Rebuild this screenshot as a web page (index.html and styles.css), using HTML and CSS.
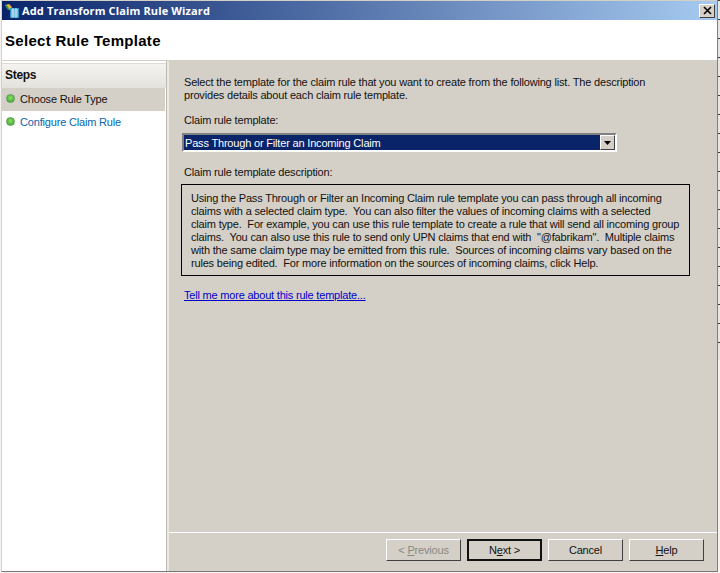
FILE: index.html
```html
<!DOCTYPE html>
<html lang="en">
<head>
<meta charset="utf-8">
<title>Add Transform Claim Rule Wizard</title>
<link rel="stylesheet" href="styles.css">
</head>
<body>
<div class="window">
  <div class="titlebar">
    <svg class="app-icon" width="16" height="16" viewBox="0 0 16 16">
      <path d="M1 2l4-1 3 3-2 3z" fill="#e8b23a"/>
      <path d="M1 2l3 5 2 0-3-5z" fill="#3f9e4a"/>
      <rect x="6" y="5" width="9" height="10" fill="#2f8fc4"/>
      <path d="M7 7h7M7 9h7M7 11h7M7 13h7M9 5v10M12 5v10" stroke="#cfeaf5" stroke-width="1"/>
    </svg>
    <span class="title-text">Add Transform Claim Rule Wizard</span>
    <span class="close-btn">
      <svg width="9" height="9" viewBox="0 0 9 9"><path d="M1 1l7 7M8 1l-7 7" stroke="#000" stroke-width="1.6"/></svg>
    </span>
  </div>
  <div class="page-head"><h1>Select Rule Template</h1></div>
  <div class="body">
    <aside class="steps">
      <div class="steps-head">Steps</div>
      <div class="step step-active"><span class="dot"></span>Choose Rule Type</div>
      <div class="step step-link"><span class="dot"></span>Configure Claim Rule</div>
    </aside>
    <main class="content">
      <div class="form">
        <p class="intro">Select the template for the claim rule that you want to create from the following list. The description<br>provides details about each claim rule template.</p>
        <div class="label label-select">Claim rule template:</div>
        <div class="select">
          <span class="select-value">Pass Through or Filter an Incoming Claim</span>
          <span class="select-arrow"><svg width="7" height="4" viewBox="0 0 7 4"><path d="M0 0h7L3.5 4z" fill="#000"/></svg></span>
        </div>
        <div class="label label-desc">Claim rule template description:</div>
        <div class="desc">Using the Pass Through or Filter an Incoming Claim rule template you can pass through all incoming<br>claims with a selected claim type.&nbsp; You can also filter the values of incoming claims with a selected<br>claim type.&nbsp; For example, you can use this rule template to create a rule that will send all incoming group<br>claims.&nbsp; You can also use this rule to send only UPN claims that end with &nbsp;"@fabrikam".&nbsp; Multiple claims<br>with the same claim type may be emitted from this rule.&nbsp; Sources of incoming claims vary based on the<br>rules being edited.&nbsp; For more information on the sources of incoming claims, click Help.</div>
        <a class="more" href="#">Tell me more about this rule template...</a>
      </div>
      <div class="buttons">
        <span class="btn btn-disabled">&lt; <u>P</u>revious</span>
        <span class="btn btn-default">N<u>e</u>xt &gt;</span>
        <span class="btn">Cancel</span>
        <span class="btn"><u>H</u>elp</span>
      </div>
    </main>
  </div>
</div>
</body>
</html>
```

FILE: styles.css
```css
* { box-sizing: border-box; }
html, body { margin: 0; padding: 0; }
body { width: 720px; height: 573px; overflow: hidden; background: repeating-linear-gradient(180deg, #3a3a3a 0 1px, #e6e6e2 1px 19px) right top / 2px 360px no-repeat, #f4f3f0; font-family: "Liberation Sans", Arial, sans-serif; font-size: 11px; letter-spacing: -.18px; color: #111; }
.window { width: 717px; height: 572px; margin-left: 1px; display: flex; flex-direction: column; padding-top: 1px; border-left: 1px solid #d4d0c8; border-right: 1px solid #808080; border-bottom: 1px solid #777; background: #d4d0c8; }
.titlebar { height: 19px; flex: none; display: flex; align-items: center; padding: 0 2px 0 2px; background: linear-gradient(90deg, #0a246a, #a6caf0); }
.app-icon { flex: none; margin-right: 2px; }
.title-text { flex: 1; color: #fff; font-family: "Open Sans", "Liberation Sans", sans-serif; font-weight: 700; font-size: 11px; letter-spacing: .13px; }
.close-btn { width: 16px; height: 14px; flex: none; display: flex; align-items: center; justify-content: center; background: #d4d0c8; border: 1px solid; border-color: #fff #404040 #404040 #fff; }
.page-head { height: 41px; flex: none; background: #fff; border-bottom: 1px solid #d4d0c8; display: flex; align-items: center; padding: 1px 0 0 3px; }
h1 { margin: 0; font-size: 15px; font-weight: 700; color: #000; font-family: "Liberation Sans", Arial, sans-serif; letter-spacing: .3px; }
.body { flex: 1; display: flex; min-height: 0; background: #d4d0c8; }
.steps { width: 165px; flex: none; background: #fff; border-right: 1px solid #bdbab2; padding-top: 2px; }
.steps-head { height: 25px; display: flex; align-items: center; padding: 0 0 2px 3px; font-weight: 700; font-size: 12px; letter-spacing: -.3px; border-top: 1px solid #dedcd6; background: linear-gradient(180deg, #f4f3f0, #e4e2dc); }
.step { height: 23px; display: flex; align-items: center; padding: 0 0 2px 4px; }
.step-active { background: #d4d0c8; margin-right: 1px; }
.step-link { color: #0a64a8; }
.dot { width: 9px; height: 9px; margin-right: 5px; border-radius: 50%; background: radial-gradient(circle at 50% 40%, #8ee060, #2f9e2f); border: 1px solid #5c9e58; flex: none; }
.content { flex: 1; border-left: 2px solid #ece9e2; display: flex; flex-direction: column; min-width: 0; }
.form { flex: 1; padding: 15px 0 0 13px; }
.intro { margin: 0 0 0 2px; line-height: 13px; }
.label { margin-left: 2px; line-height: 14px; }
.label-select { margin-top: 11px; }
.select { margin-top: 6px; width: 435px; height: 19px; display: flex; background: #0a246a; border: 2px solid; border-color: #808080 #fff #fff #808080; padding-left: 1px; }
.select-value { flex: 1; color: #fff; line-height: 16px; }
.select-arrow { width: 15px; flex: none; display: flex; align-items: center; justify-content: center; background: #d4d0c8; border: 1px solid; border-color: #fff #404040 #404040 #fff; }
.label-desc { margin-top: 13px; }
.desc { margin: 5px 0 0 -1px; width: 509px; height: 92px; border: 1px solid #000; padding: 7px 0 0 9px; line-height: 13px; white-space: nowrap; }
.more { display: block; margin: 12px 0 0 2px; color: #0000c8; text-decoration: underline; line-height: 14px; letter-spacing: -.2px; }
.buttons { height: 39px; flex: none; display: flex; align-items: flex-start; gap: 6px; padding: 6px 0 0 217px; border-top: 1px solid #fff; }
.btn { width: 75px; height: 22px; display: flex; align-items: center; justify-content: center; white-space: pre; background: #d4d0c8; border: 1px solid; border-color: #fff #404040 #404040 #fff; }
.btn-disabled { color: #8a8880; }
.btn-default { border: 2px solid #111; }
```
